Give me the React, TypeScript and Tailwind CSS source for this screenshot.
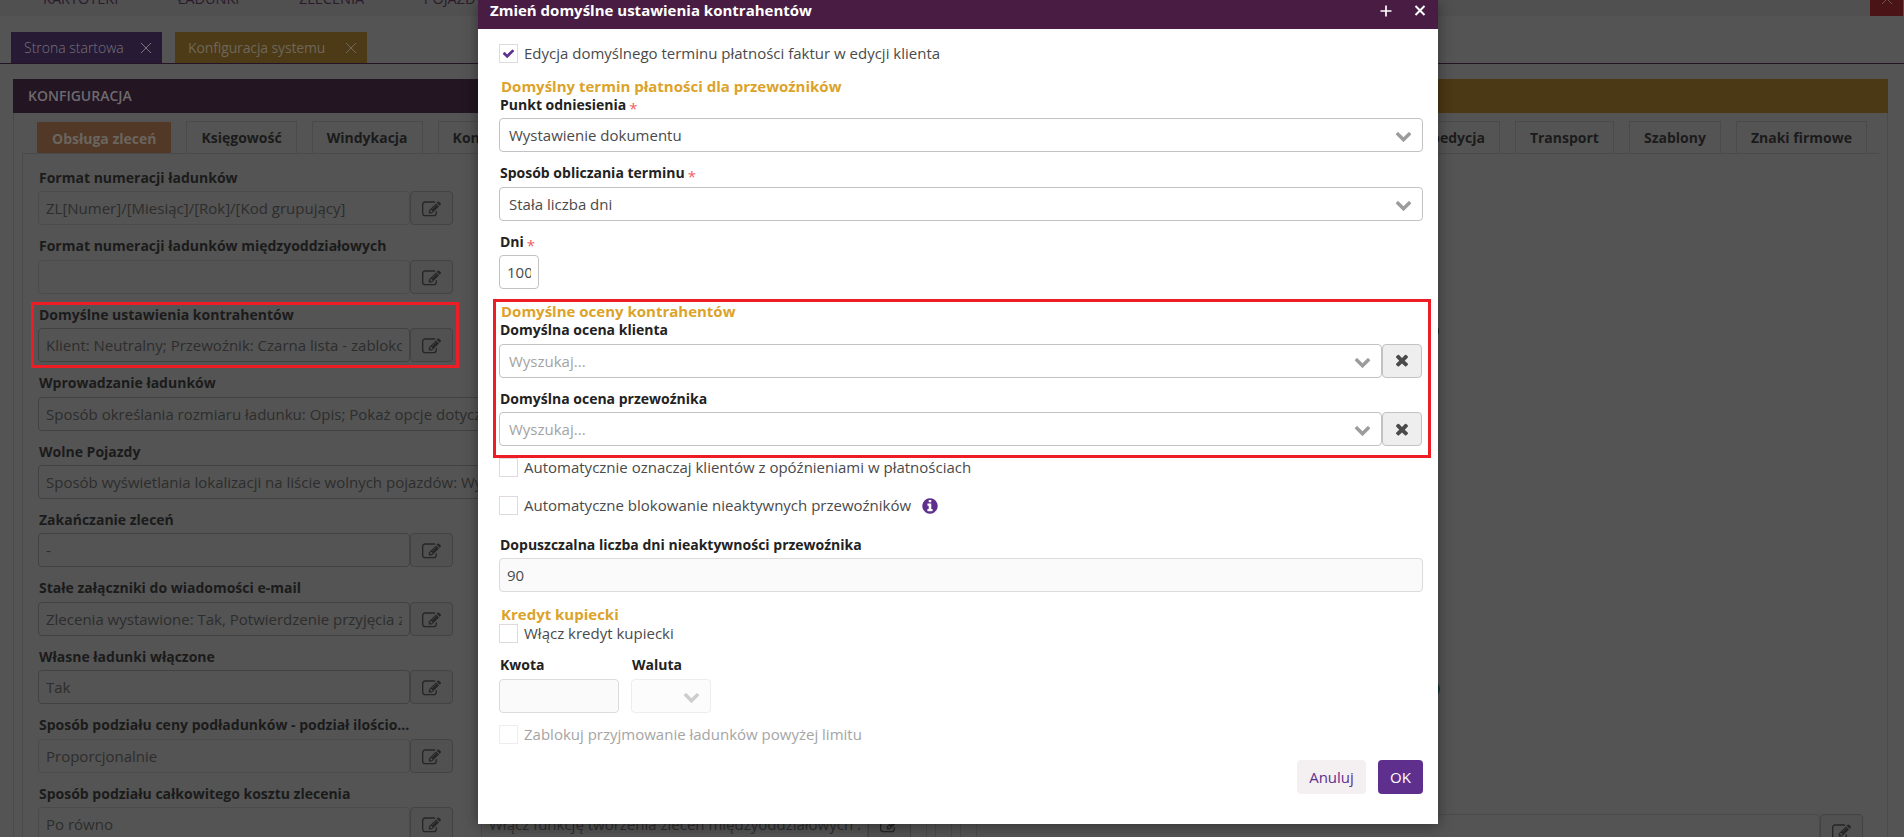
import type { ReactNode } from "react";
import clsx from "clsx";

const PATHS = {
  check:
    "M1671 566q0 40-28 68l-724 724-136 136q-28 28-68 28t-68-28l-136-136-362-362q-28-28-28-68t28-68l136-136q28-28 68-28t68 28l294 295 656-657q28-28 68-28t68 28l136 136q28 28 28 68z",
  times:
    "M1490 1322q0 40-28 68l-136 136q-28 28-68 28t-68-28l-294-294-294 294q-28 28-68 28t-68-28l-136-136q-28-28-28-68t28-68l294-294-294-294q-28-28-28-68t28-68l136-136q28-28 68-28t68 28l294 294 294-294q28-28 68-28t68 28l136 136q28 28 28 68t-28 68l-294 294 294 294q28 28 28 68z",
  chevron:
    "M1683 808l-742 741q-19 19-45 19t-45-19l-742-741q-19-19-19-45.500t19-45.500l166-165q19-19 45-19t45 19l531 531 531-531q19-19 45-19t45 19l166 165q19 19 19 45.500t-19 45.500z",
  edit: "M888 1184l116-116-152-152-116 116v56h96v96h56zm440-720q-16-16-33 1l-350 350q-17 17-1 33t33-1l350-350q17-17 1-33zm80 594v190q0 119-84.500 203.500t-203.500 84.500h-832q-119 0-203.500-84.500t-84.500-203.500v-832q0-119 84.500-203.500t203.500-84.500h832q63 0 117 25 15 7 18 23 3 17-9 29l-49 49q-14 14-32 8-23-6-45-6h-832q-66 0-113 47t-47 113v832q0 66 47 113t113 47h832q66 0 113-47t47-113v-126q0-13 9-22l64-64q15-15 35-7t20 29zm-96-738l288 288-672 672h-288v-288zm444 132l-92 92-288-288 92-92q28-28 68-28t68 28l152 152q28 28 28 68t-28 68z",
  info: "M1152 1376v-160q0-14-9-23t-23-9h-96v-512q0-14-9-23t-23-9h-320q-14 0-23 9t-9 23v160q0 14 9 23t23 9h96v320h-96q-14 0-23 9t-9 23v160q0 14 9 23t23 9h448q14 0 23-9t9-23zm-128-896v-160q0-14-9-23t-23-9h-192q-14 0-23 9t-9 23v160q0 14 9 23t23 9h192q14 0 23-9t9-23zm640 416q0 209-103 385.500t-279.500 279.500-385.500 103-385.500-103-279.500-279.500-103-385.500 103-385.500 279.500-279.500 385.500-103 385.500 103 279.500 279.500 103 385.500z",
};

function Icon({ name, className }: { name: keyof typeof PATHS; className?: string }) {
  return (
    <svg viewBox="0 0 1792 1792" fill="currentColor" className={clsx("shrink-0", className)}>
      <path d={PATHS[name]} />
    </svg>
  );
}

function Cross({ className }: { className?: string }) {
  return (
    <svg viewBox="0 0 12 12" fill="none" stroke="currentColor" className={clsx("shrink-0", className)}>
      <path d="M1 1l10 10M11 1L1 11" />
    </svg>
  );
}

/* ---------- strona pod oknem ---------- */

type Setting = {
  label: string;
  value: string;
  disabled?: boolean;
  wide?: boolean;
};

const settings: Setting[] = [
  { label: "Format numeracji ładunków", value: "ZL[Numer]/[Miesiąc]/[Rok]/[Kod grupujący]", disabled: true },
  { label: "Format numeracji ładunków międzyoddziałowych", value: "", disabled: true },
  { label: "Domyślne ustawienia kontrahentów", value: "Klient: Neutralny; Przewoźnik: Czarna lista - zablokowany" },
  { label: "Wprowadzanie ładunków", value: "Sposób określania rozmiaru ładunku: Opis; Pokaż opcje dotyczące palet", wide: true },
  { label: "Wolne Pojazdy", value: "Sposób wyświetlania lokalizacji na liście wolnych pojazdów: Wyświetlaj", wide: true },
  { label: "Zakańczanie zleceń", value: "-" },
  { label: "Stałe załączniki do wiadomości e-mail", value: "Zlecenia wystawione: Tak, Potwierdzenie przyjęcia zlecenia" },
  { label: "Własne ładunki włączone", value: "Tak" },
  { label: "Sposób podziału ceny podładunków - podział ilościo...", value: "Proporcjonalnie", disabled: true },
  { label: "Sposób podziału całkowitego kosztu zlecenia", value: "Po równo", disabled: true },
];

function SettingInput({ value, disabled, className }: { value: string; disabled?: boolean; className?: string }) {
  return (
    <div className={clsx("flex h-[34px]", className)}>
      <div
        className={clsx(
          "min-w-0 flex-1 rounded-[4px] border px-[7px]",
          disabled ? "border-[#4b4b4b]" : "border-[#424242]"
        )}
      >
        <div className="overflow-hidden whitespace-nowrap text-[15px] leading-[33px] text-[#2d2d2d]">{value}</div>
      </div>
      <div className="flex w-[43px] shrink-0 items-center justify-center rounded-[4px] border border-[#434343] bg-[#515151]">
        <Icon name="edit" className="mt-[3px] size-[19px] text-[#262626]" />
      </div>
    </div>
  );
}

function SettingRow({ label, value, disabled, wide }: Setting) {
  return (
    <div className="h-[68.45px] shrink-0">
      <div className="h-[34.45px] whitespace-nowrap pl-px pt-[9px] text-[14px] font-bold leading-6 text-[#1b1b1b]">
        {label}
      </div>
      <SettingInput value={value} disabled={disabled} className={wide ? "w-[873px]" : "w-[415px]"} />
    </div>
  );
}

function Tab({ children, active }: { children: ReactNode; active?: boolean }) {
  if (active) {
    return (
      <div className="mt-px h-8 bg-[#523826] px-[15px] text-[14px] font-bold leading-[33px] text-[#6b655f]">
        {children}
      </div>
    );
  }
  return (
    <div className="h-8 border border-b-0 border-[#4a4a4a] px-[14px] text-[14px] font-bold leading-[32px] text-[#1b1b1b]">
      {children}
    </div>
  );
}

function Page() {
  return (
    <div className="flex h-full flex-col bg-[#545454]">
      <div className="flex h-4 shrink-0 items-end justify-between bg-[#505050]">
        <div className="flex gap-[59.5px] pl-[43px] text-[14.5px] leading-[34px] text-[#2b1a2a]">
          <span>KARTOTEKI</span>
          <span>ŁADUNKI</span>
          <span>ZLECENIA</span>
          <span>POJAZDY</span>
        </div>
        <div className="mr-px flex h-4 w-[33px] items-start justify-center overflow-hidden bg-[#4a1316] text-[#6b5555]">
          <Cross className="-mt-[7px] size-3" />
        </div>
      </div>

      <div className="flex h-12 shrink-0 items-end gap-[13px] border-b border-[#251424] pl-[11px]">
        <div className="flex h-[31px] w-[151px] items-center justify-between bg-[#271a35] pl-[13px] pr-[10px] text-[14px] font-light text-[#77737b]">
          Strona startowa
          <Cross className="size-3" />
        </div>
        <div className="flex h-[31px] w-[192px] items-center justify-between bg-[#4d3a16] pl-[13px] pr-[10px] text-[14px] tracking-[-0.13px] text-[#6e675a]">
          Konfiguracja systemu
          <Cross className="size-3" />
        </div>
      </div>

      <div className="flex min-h-0 flex-1 gap-[15px] pl-[13px] pr-4 pt-[15px]">
        <div className="flex w-[923px] shrink-0 flex-col">
          <div className="h-[34px] shrink-0 bg-[#231522] pl-[15px] text-[14px] font-semibold leading-[34px] text-[#6e6a6e]">
            KONFIGURACJA
          </div>
          <div className="flex min-h-0 flex-1 flex-col border-x border-[#4a4a4a] px-2 pt-2">
            <div className="-mb-px flex gap-[15px] pl-[15px]">
              <Tab active>Obsługa zleceń</Tab>
              <Tab>Księgowość</Tab>
              <Tab>Windykacja</Tab>
              <Tab>Kontrahenci</Tab>
            </div>
            <div className="flex min-h-0 flex-1 flex-col overflow-hidden border border-b-0 border-[#4a4a4a] pl-[15px] pt-[2.75px]">
              {settings.slice(0, -1).map((s) => (
                <SettingRow key={s.label} {...s} />
              ))}
              <div className="flex shrink-0 items-end gap-7">
                <SettingRow {...settings[settings.length - 1]} />
                <SettingInput
                  value="Włącz funkcję tworzenia zleceń międzyoddziałowych :"
                  disabled
                  className="w-[430px]"
                />
              </div>
            </div>
          </div>
        </div>

        <div className="flex flex-1 flex-col">
          <div className="h-[34px] shrink-0 bg-[#4b3814]" />
          <div className="flex min-h-0 flex-1 flex-col border-x border-[#4a4a4a] px-2 pt-2">
            <div className="flex justify-end gap-[15px] pr-3">
              <Tab>Spedycja</Tab>
              <Tab>Transport</Tab>
              <Tab>Szablony</Tab>
              <Tab>Znaki firmowe</Tab>
            </div>
            <div className="flex min-h-0 flex-1 flex-col justify-end overflow-hidden border-l border-t border-[#4a4a4a] pl-[15px] pr-4">
              <div className="h-[23px] shrink-0">
                <SettingInput value="" disabled />
              </div>
            </div>
          </div>
        </div>
      </div>
    </div>
  );
}

/* ---------- okno dialogowe ---------- */

function Heading({ children, className }: { children: ReactNode; className?: string }) {
  return (
    <div className={clsx("h-[18px] pl-0.5 text-[15px] font-bold leading-[18px] text-[#dca32a]", className)}>
      {children}
    </div>
  );
}

function Field({
  label,
  required,
  className,
  children,
}: {
  label: string;
  required?: boolean;
  className?: string;
  children: ReactNode;
}) {
  return (
    <div className={className}>
      <div className="mb-[5.45px] flex h-[18px] pl-px text-[14px] font-bold leading-5 text-[#222]">
        {label}
        {required && <span className="ml-[3px] mt-[3px] text-[15px] font-normal text-[#f0605f]">*</span>}
      </div>
      {children}
    </div>
  );
}

function Select({ value, placeholder, className }: { value?: string; placeholder?: string; className?: string }) {
  return (
    <div
      className={clsx(
        "flex h-[34px] items-center justify-between rounded-[4px] border border-[#c2c2c2] bg-white pl-[9px] pr-2.5 text-[15px]",
        value ? "text-[#4a4a4a]" : "text-[#a3a3a3]",
        className
      )}
    >
      <span>{value ?? placeholder}</span>
      <Icon name="chevron" className="mt-px size-[17px] text-[#9c9c9c]" />
    </div>
  );
}

function SearchField({ label, className }: { label: string; className?: string }) {
  return (
    <Field label={label} className={className}>
      <div className="flex pr-px">
        <Select placeholder="Wyszukaj..." className="flex-1" />
        <div className="flex w-10 items-center justify-center rounded-[4px] border border-[#c2c2c2] bg-[#eee] pr-px">
          <Icon name="times" className="-mt-px size-[18px] text-[#4a4a4a]" />
        </div>
      </div>
    </Field>
  );
}

function Checkbox({
  label,
  checked,
  disabled,
  info,
  className,
}: {
  label: string;
  checked?: boolean;
  disabled?: boolean;
  info?: boolean;
  className?: string;
}) {
  return (
    <div className={clsx("flex h-[19px] items-center", className)}>
      <div
        className={clsx(
          "flex size-[19px] items-center justify-center border",
          disabled ? "border-[#efecef]" : "border-[#e0dadf]"
        )}
      >
        {checked && <Icon name="check" className="size-[13px] text-[#5f2f8e]" />}
      </div>
      <span className={clsx("ml-1.5 text-[15px] leading-[19px]", disabled ? "text-[#a5a5a5]" : "text-[#4a4a4a]")}>
        {label}
      </span>
      {info && <Icon name="info" className="ml-2.5 mt-px size-[18px] text-[#5f2f8e]" />}
    </div>
  );
}

function Dialog() {
  return (
    <div className="absolute left-[478px] top-0 h-[824px] w-[960px] bg-white shadow-[0_2px_14px_rgba(0,0,0,0.4)]">
      <div className="flex h-[29px] items-start justify-between bg-[#481c43] pl-3 pr-3 text-white">
        <span className="text-[15px] font-bold leading-[21px]">Zmień domyślne ustawienia kontrahentów</span>
        <div className="flex items-center gap-[22px] pt-[5px]">
          <svg viewBox="0 0 12 12" className="size-3" fill="none" stroke="currentColor" strokeWidth="1.7">
            <path d="M6 .5v11M.5 6h11" />
          </svg>
          <svg viewBox="0 0 12 12" className="size-3" fill="none" stroke="currentColor" strokeWidth="2">
            <path d="M1.500 1l9 9M10.500 1l-9 9" />
          </svg>
        </div>
      </div>

      <div className="pl-[21px] pr-[15px] pt-[15px]">
        <Checkbox checked label="Edycja domyślnego terminu płatności faktur w edycji klienta" />

        <Heading className="mt-[14px]">Domyślny termin płatności dla przewoźników</Heading>
        <Field label="Punkt odniesienia" required>
          <Select value="Wystawienie dokumentu" />
        </Field>
        <Field label="Sposób obliczania terminu" required className="mt-[11px]">
          <Select value="Stała liczba dni" />
        </Field>
        <Field label="Dni" required className="mt-[11px]">
          <div className="h-[34px] w-10 rounded-[4px] border border-[#c2c2c2] px-[7px]">
            <div className="overflow-hidden text-[15px] leading-8 text-[#4a4a4a]">100</div>
          </div>
        </Field>

        <Heading className="mt-[13px]">Domyślne oceny kontrahentów</Heading>
        <SearchField label="Domyślna ocena klienta" />
        <SearchField label="Domyślna ocena przewoźnika" className="mt-[11px]" />

        <Checkbox label="Automatycznie oznaczaj klientów z opóźnieniami w płatnościach" className="mt-3" />
        <Checkbox label="Automatyczne blokowanie nieaktywnych przewoźników" info className="mt-[19px]" />

        <Field label="Dopuszczalna liczba dni nieaktywności przewoźnika" className="mt-[19.5px]">
          <div className="h-[34px] rounded-[4px] border border-[#dcdadb] bg-[#fafafa] px-[7px] text-[15px] leading-[33px] text-[#4a4a4a]">
            90
          </div>
        </Field>

        <Heading className="mt-[13px]">Kredyt kupiecki</Heading>
        <Checkbox label="Włącz kredyt kupiecki" className="mt-px" />
        <div className="mt-3 flex gap-3">
          <Field label="Kwota" className="w-[120px]">
            <div className="h-[34px] rounded-[4px] border border-[#ddd9dc] bg-[#fafafa]" />
          </Field>
          <Field label="Waluta" className="w-20">
            <div className="flex h-[34px] items-center justify-end rounded-[4px] border border-[#eeecee] bg-[#fcfcfc] pr-2.5">
              <Icon name="chevron" className="mt-px size-[17px] text-[#cdcdcd]" />
            </div>
          </Field>
        </div>
        <Checkbox label="Zablokuj przyjmowanie ładunków powyżej limitu" disabled className="mt-3" />

        <div className="mt-4 flex justify-end gap-3 text-[15px] leading-[34px]">
          <button className="h-[34px] w-[69px] rounded-[4px] bg-[#f4f0f1] text-[#5f2f8e]">Anuluj</button>
          <button className="h-[34px] w-[45px] rounded-[4px] bg-[#5f2f8e] text-white">OK</button>
        </div>
      </div>
    </div>
  );
}

export default function App() {
  return (
    <div className="relative h-[837px] w-[1904px] overflow-hidden font-['Open_Sans','Noto_Sans',sans-serif]">
      <Page />

      {/* ikony pomocy wystające spod okna */}
      <div className="absolute left-[1423px] top-[323px] size-4 rounded-full bg-[#16222f]" />
      <div className="absolute left-[1424px] top-[681px] size-4 rounded-full bg-[#1b3438]" />

      <Dialog />

      {/* czerwone ramki wyróżniające ustawienia */}
      <div className="absolute left-[31px] top-[302px] h-[66px] w-[428px] border-3 border-[#ee1c24]" />
      <div className="absolute left-[493px] top-[299px] h-[159px] w-[938px] border-3 border-[#ee1c24]" />
    </div>
  );
}
